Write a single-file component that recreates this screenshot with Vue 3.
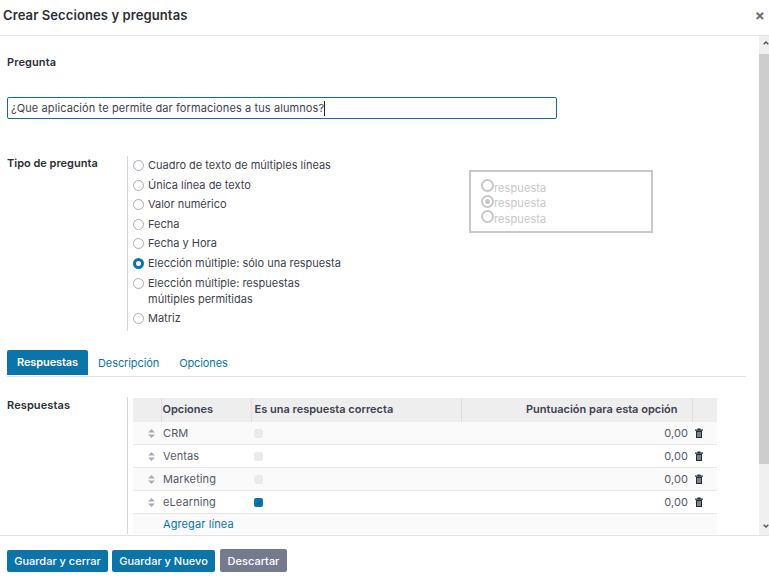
<script setup>
const questionTypes = [
  { label: 'Cuadro de texto de múltiples líneas' },
  { label: 'Única línea de texto' },
  { label: 'Valor numérico' },
  { label: 'Fecha' },
  { label: 'Fecha y Hora' },
  { label: 'Elección múltiple: sólo una respuesta', checked: true },
  { label: 'Elección múltiple: respuestas múltiples permitidas', wrap: true },
  { label: 'Matriz' }
];

const answers = [
  { name: 'CRM', correct: false },
  { name: 'Ventas', correct: false },
  { name: 'Marketing', correct: false },
  { name: 'eLearning', correct: true }
];
</script>

<template>
  <div class="dialog">
    <header class="head">
      <h4>Crear Secciones y preguntas</h4>
      <span class="close">×</span>
    </header>

    <div class="middle">
      <main class="body">
        <div class="label question-label">Pregunta</div>
        <div class="question-input">¿Que aplicación te permite dar formaciones a tus alumnos?<i class="caret"></i></div>

        <div class="type-row">
          <div class="label type-label">Tipo de pregunta</div>
          <div class="type-list">
            <div v-for="t in questionTypes" :key="t.label" class="type-item">
              <span class="radio" :class="{ on: t.checked }"></span>
              <span class="type-text" :class="{ wrap: t.wrap }">{{ t.label }}</span>
            </div>
          </div>
          <div class="preview">
            <div v-for="n in 3" :key="n" class="preview-line">
              <span class="preview-radio" :class="{ on: n === 2 }"></span>respuesta
            </div>
          </div>
        </div>

        <nav class="tabs">
          <span class="tab active">Respuestas</span>
          <span class="tab">Descripción</span>
          <span class="tab">Opciones</span>
        </nav>

        <div class="answers-row">
          <div class="label answers-label">Respuestas</div>
          <div class="answers-cell">
            <table>
              <thead>
                <tr>
                  <th class="c-handle"></th>
                  <th class="c-name">Opciones</th>
                  <th class="c-correct">Es una respuesta correcta</th>
                  <th class="c-score">Puntuación para esta opción</th>
                  <th class="c-del"></th>
                </tr>
              </thead>
              <tbody>
                <tr v-for="a in answers" :key="a.name">
                  <td class="c-handle">
                    <svg width="7" height="9" viewBox="0 0 7 9"><path d="M3.5 0 7 3.5H0zM0 5.5h7L3.5 9z" fill="#a9adb8" /></svg>
                  </td>
                  <td class="c-name">{{ a.name }}</td>
                  <td class="c-correct"><span class="check" :class="{ on: a.correct }"></span></td>
                  <td class="c-score">0,00</td>
                  <td class="c-del">
                    <svg width="8" height="10" viewBox="0 0 8 10">
                      <rect x="1.5" y="3.5" width="5" height="6" fill="#7d838c" stroke="#222c36" />
                      <path d="M0 1.5h8v1.2H0zM2.5.5h3V2h-3z" fill="#222c36" />
                    </svg>
                  </td>
                </tr>
                <tr class="add-row">
                  <td></td>
                  <td colspan="4"><span class="add">Agregar línea</span></td>
                </tr>
              </tbody>
            </table>
          </div>
        </div>
      </main>

      <aside class="scrollbar">
        <div class="arrow up">
          <svg width="9" height="6" viewBox="0 0 9 6"><path d="M1 5 4.5 1.5 8 5" fill="none" stroke="#505050" stroke-width="2" /></svg>
        </div>
        <div class="thumb"></div>
        <div class="track"></div>
        <div class="arrow">
          <svg width="9" height="6" viewBox="0 0 9 6"><path d="M1 1 4.5 4.5 8 1" fill="none" stroke="#505050" stroke-width="2" /></svg>
        </div>
      </aside>
    </div>

    <footer class="foot">
      <button class="btn primary first">Guardar y cerrar</button>
      <button class="btn primary second">Guardar y Nuevo</button>
      <button class="btn secondary">Descartar</button>
    </footer>
  </div>
</template>

<style>
html, body {
  margin: 0;
  background: #fff;
}
</style>

<style scoped>
.dialog {
  width: 769px;
  height: 579px;
  display: flex;
  flex-direction: column;
  overflow: hidden;
  background: #fff;
  color: #3d4250;
  font-family: Inter, "Open Sans", sans-serif;
  font-size: 11px;
  letter-spacing: 0.1px;
}
.head {
  height: 35px;
  flex: none;
  box-sizing: content-box;
  display: flex;
  align-items: center;
  justify-content: space-between;
  padding: 0 4px 0 3px;
  border-bottom: 1px solid #e2e2e2;
}
.head h4 {
  margin: 0 0 5px;
  font-size: 13px;
  font-weight: 600;
  color: #2b2f38;
}
.close {
  margin-bottom: 5px;
  font-size: 15px;
  font-weight: 700;
  color: #6d6f78;
  line-height: 1;
}
.middle {
  flex: 1;
  min-height: 0;
  display: flex;
}
.body {
  flex: 1;
  min-width: 0;
  overflow: hidden;
  padding: 0 13px 0 7px;
}
.label {
  font-weight: 600;
  color: #2b2f38;
}
.question-label {
  margin-top: 19px;
  line-height: 14px;
}
.question-input {
  width: 550px;
  height: 22px;
  margin-top: 28px;
  box-sizing: border-box;
  padding-left: 3px;
  display: flex;
  align-items: center;
  border: 1px solid #0d6fa3;
  border-radius: 2px;
  color: #3d4250;
}
.caret {
  width: 1px;
  height: 15px;
  background: #222;
}
.type-row {
  display: flex;
  margin-top: 37px;
}
.type-label {
  width: 120px;
  flex: none;
  line-height: 15px;
  letter-spacing: 0;
}
.type-list {
  width: 220px;
  flex: none;
  box-sizing: border-box;
  border-left: 1px solid #d8d8d8;
  padding: 1px 0 1px 5px;
}
.type-item {
  display: flex;
  padding-bottom: 3.6px;
  line-height: 16px;
}
.radio {
  width: 9px;
  height: 9px;
  flex: none;
  margin: 3px 4px 0 0;
  border: 1px solid #a9adb8;
  border-radius: 50%;
  background: #fff;
}
.radio.on {
  border: 3px solid #0b74a8;
  width: 5px;
  height: 5px;
}
.type-text {
  white-space: nowrap;
  letter-spacing: 0;
}
.type-text.wrap {
  white-space: normal;
  width: 170px;
}
.preview {
  margin: 14px 0 0 122px;
  padding: 8px 0 0 10px;
  width: 170px;
  height: 51px;
  border: 2px solid #c8c8c8;
  color: #c8c8c8;
}
.preview-line {
  display: flex;
  align-items: center;
  height: 15.5px;
}
.preview-radio {
  width: 9px;
  height: 9px;
  flex: none;
  margin-top: -4px;
  border: 2px solid #c8c8c8;
  border-radius: 50%;
  position: relative;
}
.preview-radio.on::after {
  content: "";
  position: absolute;
  inset: 2px;
  border-radius: 50%;
  background: #c8c8c8;
}
.tabs {
  display: flex;
  align-items: stretch;
  height: 26px;
  margin-top: 19px;
  border-bottom: 1px solid #dfe2e6;
  color: #0b74a8;
  letter-spacing: -0.1px;
}
.tab {
  display: flex;
  align-items: center;
  padding: 0 10px;
}
.tab.active {
  height: 25px;
  background: #0b74a8;
  color: #fff;
  font-weight: 600;
  border-radius: 2px 2px 0 0;
}
.answers-row {
  display: flex;
  margin-top: 20px;
}
.answers-label {
  width: 120px;
  flex: none;
  line-height: 16px;
}
.answers-cell {
  padding: 1px 0 0 5px;
  border-left: 1px solid #d8d8d8;
}
table {
  width: 584px;
  table-layout: fixed;
  border-collapse: collapse;
}
th, td {
  box-sizing: border-box;
  padding: 0;
}
th {
  height: 24px;
  padding: 0 0 2px 3px;
  background: #eeeeee;
  font-weight: 600;
  text-align: left;
  border-left: 1px solid #dedede;
  color: #3d4250;
  letter-spacing: 0;
}
th:first-child {
  border-left: none;
}
td {
  height: 23px;
  border-bottom: 1px solid #e7e7e7;
  color: #555a68;
}
tbody tr:nth-child(odd) {
  background: #fafafa;
}
.c-handle {
  width: 28px;
}
td.c-handle svg {
  display: block;
  margin: 1px 0 0 15px;
}
.c-name {
  width: 90px;
}
th.c-name {
  padding-left: 1px;
}
td.c-name {
  padding-left: 2px;
}
.c-correct {
  width: 210px;
}
td.c-correct {
  padding-left: 3px;
}
th.c-score {
  padding-right: 14px;
  text-align: right;
}
td.c-score {
  padding-right: 4px;
  text-align: right;
}
.c-del {
  width: 25px;
}
td.c-del svg {
  display: block;
  margin-left: 3px;
}
.check {
  display: block;
  width: 9px;
  height: 9px;
  background: #e9ecef;
  border-radius: 2px;
  position: relative;
}
.check.on {
  background: #0b74a8;
}
.check.on::after {
  content: "";
  position: absolute;
  left: 3px;
  top: 2px;
  width: 2px;
  height: 4px;
  border: solid #0a5a83;
  border-width: 0 1px 1px 0;
  transform: rotate(45deg);
}
.add-row td {
  border-bottom: none;
  height: 20px;
}
.add {
  margin-left: 2px;
  color: #0b74a8;
}
.scrollbar {
  width: 10px;
  flex: none;
  display: flex;
  flex-direction: column;
  overflow: hidden;
  background: #f0f0f0;
}
.arrow {
  height: 18px;
  flex: none;
  padding-left: 4px;
  display: flex;
  align-items: center;
}
.arrow.up {
  padding-bottom: 4px;
  height: 14px;
}
.thumb {
  height: 410px;
  background: #cdcdcd;
}
.track {
  flex: 1;
}
.foot {
  flex: none;
  height: 44px;
  box-sizing: border-box;
  display: flex;
  align-items: flex-start;
  gap: 4px;
  padding: 14px 7px 0;
  border-top: 1px solid #e2e2e2;
}
.btn {
  height: 22px;
  padding: 0;
  border: none;
  border-radius: 2px;
  color: #fff;
  font: inherit;
  font-weight: 500;
}
.primary {
  background: #0b74a8;
}
.first {
  width: 101px;
}
.second {
  width: 103px;
}
.secondary {
  width: 67px;
  height: 23px;
  margin: -1px 0 0 1px;
  background: #767a8f;
}
</style>
